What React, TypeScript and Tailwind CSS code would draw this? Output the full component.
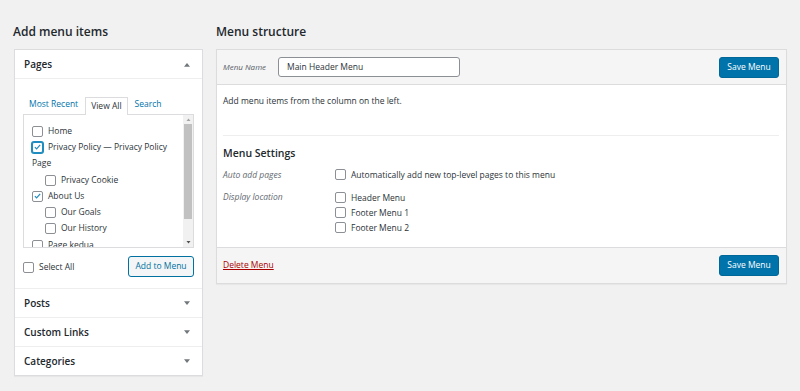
import React from "react";

function Box({ checked, focus }: { checked?: boolean; focus?: boolean }) {
  return (
    <span
      className={`inline-flex items-center justify-center w-[11px] h-[11px] shrink-0 rounded-[2px] border bg-white align-middle ${
        focus ? "border-[#1e8cbe] shadow-[0_0_0_1px_#1e8cbe]" : "border-[#8c8f94]"
      }`}
    >
      {checked && (
        <svg viewBox="0 0 12 12" className="w-[10px] h-[10px]">
          <path d="M2.5 6.2l2.3 2.4 4.8-5.4" fill="none" stroke="#1e8cbe" strokeWidth={1.6} />
        </svg>
      )}
    </span>
  );
}

function Arrow({ up }: { up?: boolean }) {
  return (
    <svg viewBox="0 0 8 6" className="w-[6px] h-[5px]">
      <path d={up ? "M0 6L4 1l4 5z" : "M0 0h8L4 5z"} fill="#72777c" />
    </svg>
  );
}

function PageItem({ label, checked, focus, indent }: { label: string; checked?: boolean; focus?: boolean; indent?: boolean }) {
  return (
    <div className={`h-[16px] flex items-center ${indent ? "pl-[13px]" : ""}`}>
      <Box checked={checked} focus={focus} />
      <span className="ml-[5px]">{label}</span>
    </div>
  );
}

function Accordion({ title }: { title: string }) {
  return (
    <div className="h-[29px] border-t border-[#eeeeee] flex items-center justify-between pl-[9px] pr-[12px]">
      <span className="font-semibold text-[10px] text-[#23282d]">{title}</span>
      <Arrow />
    </div>
  );
}

function SaveButton() {
  return (
    <button className="w-[60px] h-[21px] rounded-[3px] bg-[#0073aa] border border-[#006799] text-white text-[8.5px]">
      Save Menu
    </button>
  );
}

export default function App() {
  return (
    <div
      className="w-[800px] h-[391px] bg-[#f1f1f1] text-[#2c3338] text-[8.5px] flex gap-[13px] pl-[14px] overflow-hidden"
      style={{ fontFamily: '"Open Sans", "Noto Sans", sans-serif' }}
    >
      {/* Left column */}
      <div className="w-[189px] shrink-0">
        <h2 className="h-[49px] pt-[22px] text-[12px] font-semibold text-[#23282d] leading-[20px] -ml-[1px]">
          Add menu items
        </h2>
        <div className="bg-white border border-[#dcdcde] shadow-[0_1px_1px_rgba(0,0,0,0.04)]">
          <div className="h-[29px] flex items-center justify-between pl-[9px] pr-[12px] border-b border-[#eeeeee]">
            <span className="font-semibold text-[10px] text-[#23282d]">Pages</span>
            <Arrow up />
          </div>
          <div className="px-[8px] pt-[16px] pb-[11px]">
            <div className="flex items-end gap-[7px] pl-[6px] h-[19px]">
              <span className="text-[#0073aa] pb-[3px]">Most Recent</span>
              <span className="h-[18px] px-[5px] border border-b-0 border-[#dcdcde] bg-white relative top-[1px] flex items-center">
                View All
              </span>
              <span className="text-[#0073aa] pb-[3px]">Search</span>
            </div>
            <div className="h-[134px] border border-[#dcdcde] flex overflow-hidden">
              <div className="flex-1 pl-[8px] pt-[8px] overflow-hidden">
                <PageItem label="Home" />
                <div className="h-[16px] flex items-center">
                  <Box checked focus />
                  <span className="ml-[5px] whitespace-nowrap">Privacy Policy — Privacy Policy</span>
                </div>
                <div className="h-[17px] flex items-center">Page</div>
                <PageItem label="Privacy Cookie" indent />
                <PageItem label="About Us" checked />
                <PageItem label="Our Goals" indent />
                <div className="h-[17px] flex items-center pl-[13px]">
                  <Box />
                  <span className="ml-[5px]">Our History</span>
                </div>
                <PageItem label="Page kedua" />
              </div>
              <div className="w-[10px] bg-[#f1f1f1] flex flex-col items-center">
                <div className="h-[9px] flex items-center">
                  <svg viewBox="0 0 8 6" className="w-[5px] h-[3px]">
                    <path d="M0 6L4 1l4 5z" fill="#a3a3a3" />
                  </svg>
                </div>
                <div className="w-[8px] h-[95px] bg-[#c1c1c1]" />
                <div className="flex-1" />
                <div className="h-[9px] flex items-center">
                  <svg viewBox="0 0 8 6" className="w-[5px] h-[3px]">
                    <path d="M0 0h8L4 5z" fill="#505050" />
                  </svg>
                </div>
              </div>
            </div>
            <div className="flex items-center justify-between mt-[8px]">
              <div className="flex items-center pt-[1px]">
                <Box />
                <span className="ml-[5px]">Select All</span>
              </div>
              <button className="w-[66px] h-[21px] rounded-[3px] border border-[#0071a1] bg-[#f3f5f6] text-[#0071a1] text-[8.5px]">
                Add to Menu
              </button>
            </div>
          </div>
          <Accordion title="Posts" />
          <Accordion title="Custom Links" />
          <Accordion title="Categories" />
        </div>
      </div>

      {/* Right column */}
      <div className="w-[571px] shrink-0">
        <h2 className="h-[49px] pt-[22px] text-[12px] font-semibold text-[#23282d] leading-[20px]">Menu structure</h2>
        <div className="border border-[#dcdcde] shadow-[0_1px_1px_rgba(0,0,0,0.04)]">
          <div className="h-[35px] bg-[#f5f5f5] border-b border-[#dcdcde] flex items-center pl-[6px] pr-[7px]">
            <span className="italic text-[8px] text-[#555d66] w-[55px]">Menu Name</span>
            <div className="w-[182px] h-[20px] border border-[#8c8f94] rounded-[3px] bg-white flex items-center pl-[8px] text-[8.5px]">
              Main Header Menu
            </div>
            <div className="flex-1" />
            <SaveButton />
          </div>
          <div className="bg-white px-[6px] h-[162px]">
            <p className="pt-[10px] leading-[12px]">Add menu items from the column on the left.</p>
            <div className="mt-[28px] border-t border-[#eeeeee] mr-[1px]" />
            <h3 className="mt-[9px] text-[10.5px] font-semibold text-[#23282d] leading-[16px]">Menu Settings</h3>
            <div className="flex mt-[6px] leading-[15px]">
              <span className="w-[112px] italic text-[8.5px] text-[#646970]">Auto add pages</span>
              <div className="flex items-center">
                <Box />
                <span className="ml-[5px]">Automatically add new top-level pages to this menu</span>
              </div>
            </div>
            <div className="flex mt-[7px] leading-[15px]">
              <span className="w-[112px] italic text-[8.5px] text-[#646970]">Display location</span>
              <div className="flex flex-col pt-[1px]">
                {["Header Menu", "Footer Menu 1", "Footer Menu 2"].map((l) => (
                  <div key={l} className="flex items-center">
                    <Box />
                    <span className="ml-[5px]">{l}</span>
                  </div>
                ))}
              </div>
            </div>
          </div>
          <div className="h-[36px] bg-[#f5f5f5] border-t border-[#dcdcde] flex items-center justify-between pl-[6px] pr-[7px]">
            <a className="text-[#a00] underline text-[8.5px]">Delete Menu</a>
            <SaveButton />
          </div>
        </div>
      </div>
    </div>
  );
}
